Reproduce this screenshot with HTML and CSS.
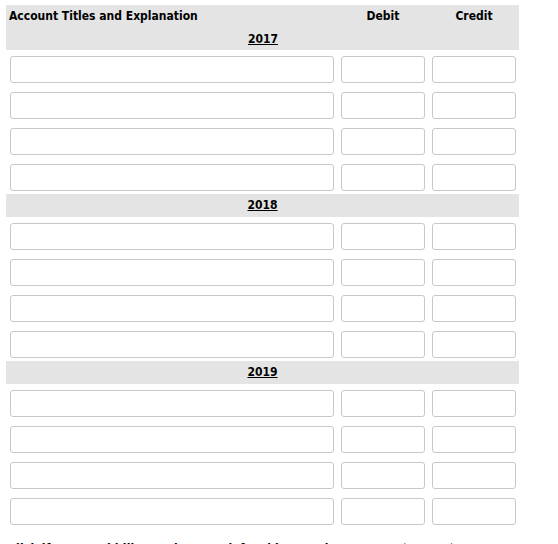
FILE: index.html
```html
<!DOCTYPE html>
<html lang="en">
<head>
<meta charset="utf-8">
<title>Journal Entries</title>
<link rel="stylesheet" href="styles.css">
</head>
<body>
<div class="sheet">
  <div class="head-band">
    <div class="head-row">
      <div class="col-title">Account Titles and Explanation</div>
      <div class="col-num">Debit</div>
      <div class="col-num">Credit</div>
    </div>
    <div class="year"><u>2017</u></div>
  </div>
  <div class="rows">
    <div class="row"><input class="in-acct" type="text"><input class="in-num" type="text"><input class="in-num" type="text"></div>
    <div class="row"><input class="in-acct" type="text"><input class="in-num" type="text"><input class="in-num" type="text"></div>
    <div class="row"><input class="in-acct" type="text"><input class="in-num" type="text"><input class="in-num" type="text"></div>
    <div class="row"><input class="in-acct" type="text"><input class="in-num" type="text"><input class="in-num" type="text"></div>
  </div>
  <div class="year-band"><u>2018</u></div>
  <div class="rows">
    <div class="row"><input class="in-acct" type="text"><input class="in-num" type="text"><input class="in-num" type="text"></div>
    <div class="row"><input class="in-acct" type="text"><input class="in-num" type="text"><input class="in-num" type="text"></div>
    <div class="row"><input class="in-acct" type="text"><input class="in-num" type="text"><input class="in-num" type="text"></div>
    <div class="row"><input class="in-acct" type="text"><input class="in-num" type="text"><input class="in-num" type="text"></div>
  </div>
  <div class="year-band"><u>2019</u></div>
  <div class="rows">
    <div class="row"><input class="in-acct" type="text"><input class="in-num" type="text"><input class="in-num" type="text"></div>
    <div class="row"><input class="in-acct" type="text"><input class="in-num" type="text"><input class="in-num" type="text"></div>
    <div class="row"><input class="in-acct" type="text"><input class="in-num" type="text"><input class="in-num" type="text"></div>
    <div class="row"><input class="in-acct" type="text"><input class="in-num" type="text"><input class="in-num" type="text"></div>
  </div>
  <p class="show-work"><b class="prompt">Click if you would like to Show Work for this question:</b> <a class="link" href="#">Open Show Work</a></p>
</div>
</body>
</html>
```
FILE: styles.css
```css
html, body {
  margin: 0;
  padding: 0;
  background: #fff;
}
body {
  font-family: "DejaVu Sans", Tahoma, Verdana, sans-serif;
  font-stretch: condensed;
  font-size: 12px;
  color: #000;
}
.sheet {
  width: 513px;
  padding: 5px 0 0 6px;
}
.head-band {
  background: #e4e4e4;
  padding: 3px 3px 2px 4px;
}
.head-row {
  display: grid;
  grid-template-columns: 324px 84px 84px;
  column-gap: 7px;
  line-height: 17px;
  font-weight: bold;
}
.col-title {
  margin-left: -1px;
}
.col-num {
  text-align: center;
}
.year {
  margin-top: 6px;
  line-height: 17px;
  text-align: center;
  font-weight: bold;
}
.year-band {
  background: #e4e4e4;
  height: 23px;
  box-sizing: border-box;
  padding-top: 3px;
  line-height: 17px;
  text-align: center;
  font-weight: bold;
}
.rows {
  display: flex;
  flex-direction: column;
  gap: 9px;
  padding: 6px 3px 3px 4px;
}
.row {
  display: grid;
  grid-template-columns: 324px 84px 84px;
  column-gap: 7px;
}
.in-acct, .in-num {
  box-sizing: border-box;
  height: 27px;
  margin: 0;
  padding: 2px 4px;
  border: 1px solid #c8c8c8;
  border-radius: 3px;
  background: #fff;
  font: inherit;
  font-weight: normal;
  width: 100%;
}
.show-work {
  margin: 13px 0 0 2px;
  line-height: 17px;
  white-space: nowrap;
}
.prompt {
  letter-spacing: 0.2px;
}
.link {
  color: #3a66b8;
  text-decoration: none;
  margin-left: 12px;
}
```
